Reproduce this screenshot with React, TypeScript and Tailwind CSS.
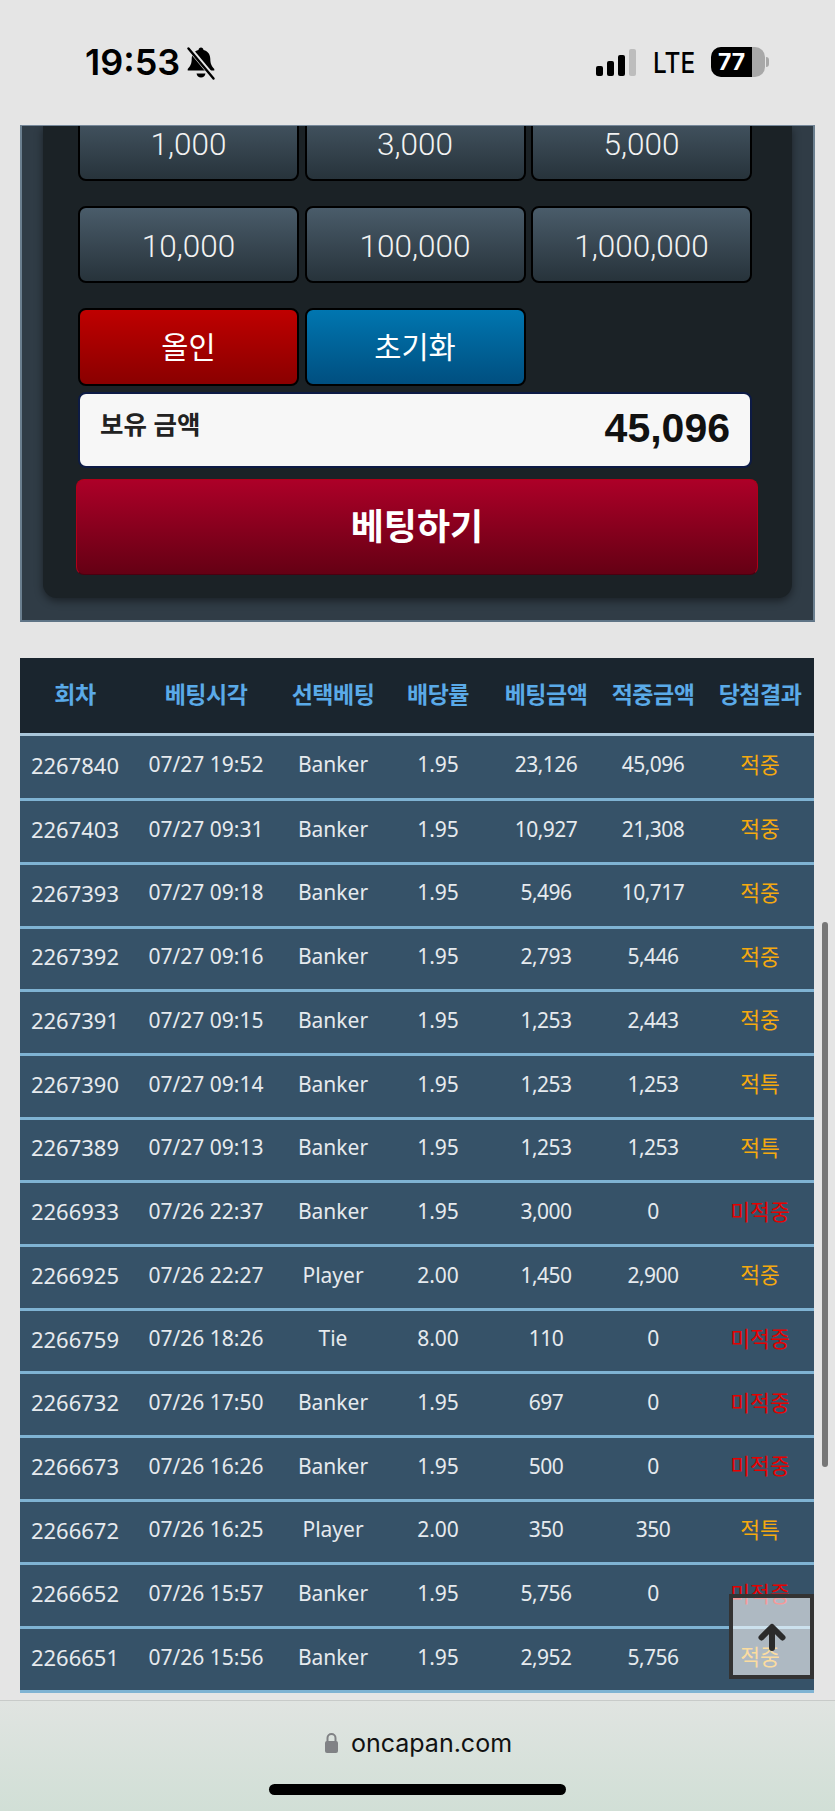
const rows: [string,string,string,string,string,string,string][] = [
['2267840','07/27 19:52','Banker','1.95','23,126','45,096','적중'],
['2267403','07/27 09:31','Banker','1.95','10,927','21,308','적중'],
['2267393','07/27 09:18','Banker','1.95','5,496','10,717','적중'],
['2267392','07/27 09:16','Banker','1.95','2,793','5,446','적중'],
['2267391','07/27 09:15','Banker','1.95','1,253','2,443','적중'],
['2267390','07/27 09:14','Banker','1.95','1,253','1,253','적특'],
['2267389','07/27 09:13','Banker','1.95','1,253','1,253','적특'],
['2266933','07/26 22:37','Banker','1.95','3,000','0','미적중'],
['2266925','07/26 22:27','Player','2.00','1,450','2,900','적중'],
['2266759','07/26 18:26','Tie','8.00','110','0','미적중'],
['2266732','07/26 17:50','Banker','1.95','697','0','미적중'],
['2266673','07/26 16:26','Banker','1.95','500','0','미적중'],
['2266672','07/26 16:25','Player','2.00','350','350','적특'],
['2266652','07/26 15:57','Banker','1.95','5,756','0','미적중'],
['2266651','07/26 15:56','Banker','1.95','2,952','5,756','적중'],
];
const heads = ['회차','베팅시각','선택베팅','배당률','베팅금액','적중금액','당첨결과'];
const chip = "pt-[4px] h-[77px] rounded-[8px] border-2 border-black bg-gradient-to-b from-[#4a5c6a] to-[#27333b] text-[#f2f2f2] text-[31.5px] font-light flex items-center justify-center [font-family:Roboto,sans-serif]";
const kr = "[font-family:'Noto_Sans','Noto_Sans_CJK_KR',sans-serif]";
const cellClass = [
  "text-[22px]",
  "text-[21px]",
  "text-[21px]",
  "text-[21px]",
  "text-[21px] tracking-[-0.5px]",
  "text-[21px] tracking-[-0.5px]",
];

function Row({cells}:{cells:string[]}){
  return <div className="flex h-[77px] gap-[5.5px]">{cells.map(c=><div key={c} className={"w-[221px] "+chip}>{c}</div>)}</div>;
}

export default function App(){
  return (
    <div className="relative h-[1811px] w-[835px] overflow-hidden bg-[#e5e5e5] flex flex-col">
      <div className="h-[125px] shrink-0 flex items-start justify-between pl-[85px] pr-[66px] pt-[44px] [font-family:Inter,sans-serif] text-black">
        <div className="flex items-center gap-[6px] h-[36px]">
          <span className="text-[36px] font-semibold leading-none">19:53</span>
          <svg width="30" height="34" viewBox="0 0 30 34" className="mt-[1px]">
            <path d="M15 1.500c1.400 0 2.400 1 2.500 2.400 4.600 1.100 6.800 4.700 6.800 9.200 0 5 1.500 7.300 4 9.900v1.500H1.700V23c2.500-2.600 4-4.900 4-9.900 0-4.500 2.200-8.100 6.800-9.200.1-1.400 1.100-2.400 2.500-2.400z" fill="#000"/>
            <path d="M10.500 27.500h9c-.4 2.500-2.200 4-4.500 4s-4.100-1.500-4.500-4z" fill="#000"/>
            <path d="M3 2l25 30" stroke="#e5e5e5" strokeWidth="5"/>
            <path d="M2.500 2.500l25 30" stroke="#000" strokeWidth="2.400" strokeLinecap="round"/>
          </svg>
        </div>
        <div className="flex items-center h-[36px]">
          <div className="flex items-end gap-[4px] h-[27px]">
            <div className="w-[7px] h-[10px] rounded-[2px] bg-black"/>
            <div className="w-[7px] h-[15px] rounded-[2px] bg-black"/>
            <div className="w-[7px] h-[21px] rounded-[2px] bg-black"/>
            <div className="w-[7px] h-[27px] rounded-[2px] bg-[#bdbdbd]"/>
          </div>
          <span className="ml-[17px] w-[43px] inline-block origin-left scale-x-[0.84] whitespace-nowrap text-[29px] font-medium leading-none">LTE</span>
          <div className="ml-[15px] relative w-[54px] h-[30px] rounded-[10px] bg-[#a8a8a8] overflow-hidden">
            <div className="w-[41px] h-full bg-black flex items-center justify-center text-white text-[23px] font-bold leading-none">77</div>
          </div>
          <div className="ml-[1px] w-[3px] h-[10px] rounded-r-[3px] bg-[#a8a8a8]"/>
        </div>
      </div>

      <div className="flex-1 min-h-0 px-[20px]">
        <div className="h-[497px] overflow-hidden border-t border-x-2 border-b-2 border-t-[#76889a] border-x-[#6b7f8f] border-b-[#5f7486] bg-[#303c46] px-[21px]">
          <div className="h-[472px] overflow-hidden rounded-b-[14px] bg-[#1b2226] shadow-[0_3px_8px_rgba(0,0,0,0.45)] px-[35px]">
            <div className="-mt-[22px] flex flex-col">
              <Row cells={['1,000','3,000','5,000']}/>
              <div className="h-[25px]"/>
              <Row cells={['10,000','100,000','1,000,000']}/>
              <div className="h-[25px]"/>
              <div className="flex gap-[5.5px]">
                <div className={"w-[221px] h-[78px] rounded-[8px] border-2 border-black bg-gradient-to-b from-[#bf0000] to-[#8a0000] text-white text-[29.5px] flex items-center justify-center "+kr}>올인</div>
                <div className={"w-[221px] h-[78px] rounded-[8px] border-2 border-black bg-gradient-to-b from-[#0076b0] to-[#004f80] text-white text-[29.5px] flex items-center justify-center "+kr}>초기화</div>
              </div>
              <div className="mt-[6px] h-[76px] w-[674px] rounded-[8px] border-2 border-[#0d1b45] bg-[#f7f7f7] flex items-start justify-between pl-[20px] pr-[20px]">
                <span className={"text-[25.500px] font-semibold text-[#222] mt-[12px] leading-[36px] "+kr}>보유 금액</span>
                <span className="text-[41px] font-bold text-[#111] leading-[68px] [font-family:'Liberation_Sans',sans-serif]">45,096</span>
              </div>
              <div className={"mt-[11px] -ml-[2px] h-[96px] w-[682px] rounded-[8px] border border-[#b00018] border-b-[#4a0010] bg-gradient-to-b from-[#ad0028] to-[#650014] text-white text-[36px] font-bold flex items-center justify-center "+kr}>베팅하기</div>
            </div>
          </div>
        </div>

        <table className="mt-[36px] w-[794px] table-fixed border-collapse">
          <colgroup>
            <col className="w-[110px]"/><col className="w-[152px]"/><col className="w-[102px]"/><col className="w-[108px]"/><col className="w-[108px]"/><col className="w-[106px]"/><col className="w-[108px]"/>
          </colgroup>
          <thead>
            <tr className="h-[75px] bg-[#1a252e]">
              {heads.map(h=><th key={h} className={"pb-[3px] text-[#5aaae8] text-[23px] font-bold tracking-[-0.5px] "+kr}>{h}</th>)}
            </tr>
            <tr className="h-[3px] bg-[#a9c6da]"><th colSpan={7} className="p-0"/></tr>
          </thead>
          <tbody>
            {rows.map(r=>(
              <tr key={r[0]} className="h-[63.7px] bg-[#365268] border-b-[3px] border-[#7fb3d3]">
                {r.slice(0,6).map((c,i)=><td key={i} className={"text-center text-[#e6eaee] font-normal p-0 pb-[4px] "+cellClass[i]+" "+kr}>{c}</td>)}
                <td className={"text-center text-[21.500px] p-0 pb-[4px] font-normal "+kr+" "+(r[6]==='미적중'?'text-[#e60000]':'text-[#f5a90f]')}>{r[6]}</td>
              </tr>
            ))}
          </tbody>
        </table>
      </div>

      <div className="absolute left-[729px] top-[1594px] w-[85px] h-[85px] border-[4px] border-[#333] bg-white/60 flex items-center justify-center">
        <svg width="28" height="28" viewBox="0 0 28 28"><path d="M14 25V5M3.500 14.500L14 4l10.500 10.500" fill="none" stroke="#2b2b2b" strokeWidth="6" strokeLinecap="round" strokeLinejoin="round"/></svg>
      </div>
      <div className="absolute left-[822px] top-[922px] w-[6px] h-[545px] rounded-full bg-[#777]"/>

      <div className="absolute left-0 top-[1700px] w-full h-[111px] border-t border-[#c8cbc9] bg-gradient-to-b from-[#e0e4e1] to-[#d1dfd6]">
        <div className="flex items-center justify-center gap-[12px] h-[84px] pl-[1px] [font-family:Inter,sans-serif]">
          <svg width="15" height="22" viewBox="0 0 15 22"><path d="M3.500 10V6a4 4 0 0 1 8 0v4" fill="none" stroke="#808285" strokeWidth="2"/><rect x="1" y="9" width="13" height="12" rx="2" fill="#808285"/></svg>
          <span className="text-[25px] text-[#111] leading-none">oncapan.com</span>
        </div>
        <div className="mx-auto -mt-[1px] w-[297px] h-[11px] rounded-full bg-black"/>
      </div>
    </div>
  );
}
